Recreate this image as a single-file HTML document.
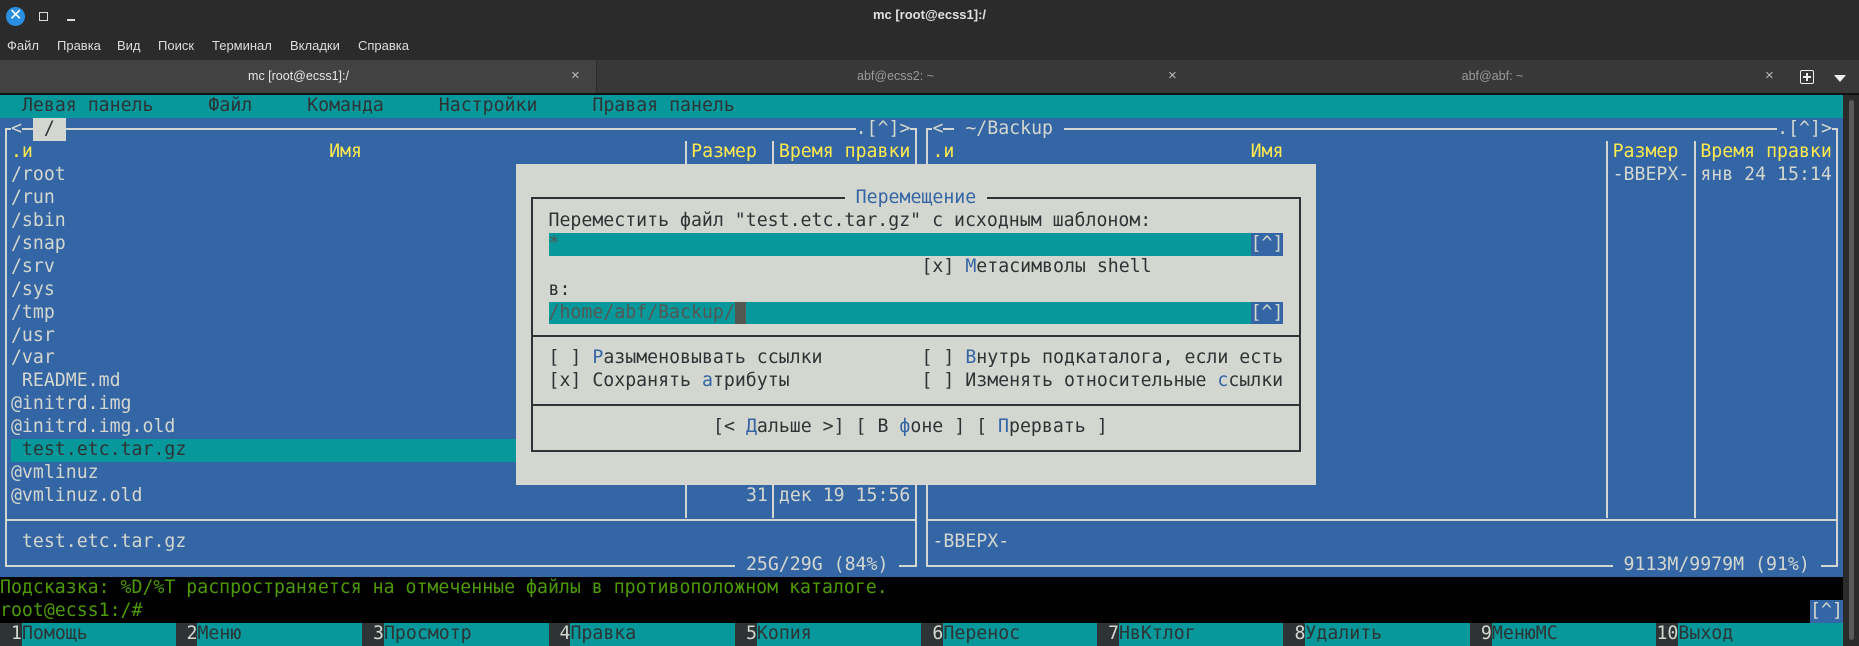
<!DOCTYPE html>
<html><head><meta charset="utf-8">
<style>
*{margin:0;padding:0;box-sizing:border-box}
html,body{width:1859px;height:645px;overflow:hidden;background:#2b2b2b;font-family:"Liberation Sans","DejaVu Sans",sans-serif}
.t{position:absolute;white-space:pre;font-family:"DejaVu Sans Mono",monospace;font-size:18.22px;line-height:22.95px;height:22.95px;
 left:calc(var(--c)*10.97px);top:calc(95px + var(--r)*22.95px);color:#d3d7cf}
.bg{position:absolute;left:calc(var(--c)*10.97px);top:calc(95px + var(--r)*22.95px);width:calc(var(--w)*10.97px);height:calc(var(--h,1)*22.95px)}
.h{position:absolute;height:2px;background:#d3d7cf;left:calc(var(--c)*10.97px + 5px);width:calc(var(--w)*10.97px + 1px);top:calc(95px + var(--r)*22.95px + 10.5px)}
.v{position:absolute;width:2px;background:#d3d7cf;left:calc(var(--c)*10.97px + 4.5px);top:calc(95px + var(--r)*22.95px + var(--o,10.5px));height:calc(var(--h)*22.95px + var(--e,0px))}
.d{background:#2e3436}
.y{color:#fce94f}
.k{color:#2e3436}
.b{color:#3465a4}
.blu{background:#3465a4}
.tl{background:#06989a}
.gr{background:#d3d7cf}
.ui{position:absolute;white-space:pre;font-size:14px;color:#dcdcdc}
</style></head><body>
<div style="position:absolute;left:6px;top:7px;width:19px;height:19px;border-radius:50%;background:#2a8fe0"></div>
<div class="ui" style="left:9px;top:5px;font-size:16px;font-weight:bold;color:#fff">✕</div>
<div style="position:absolute;left:39px;top:12px;width:9px;height:9px;border:1.5px solid #ddd"></div>
<div style="position:absolute;left:67px;top:19px;width:8px;height:1.5px;background:#ddd"></div>
<div class="ui" style="left:0;top:7px;width:1859px;text-align:center;font-size:13px;font-weight:bold;color:#e0e0e0">mc [root@ecss1]:/</div>
<div class="ui" style="left:7px;top:38px;font-size:13px">Файл</div>
<div class="ui" style="left:57px;top:38px;font-size:13px">Правка</div>
<div class="ui" style="left:117px;top:38px;font-size:13px">Вид</div>
<div class="ui" style="left:158px;top:38px;font-size:13px">Поиск</div>
<div class="ui" style="left:212px;top:38px;font-size:13px">Терминал</div>
<div class="ui" style="left:290px;top:38px;font-size:13px">Вкладки</div>
<div class="ui" style="left:358px;top:38px;font-size:13px">Справка</div>
<div style="position:absolute;left:0;top:60px;width:1859px;height:33px;background:#383838"></div>
<div style="position:absolute;left:0;top:60px;width:597px;height:33px;background:#424242;border-right:1px solid #2b2b2b"></div>
<div style="position:absolute;left:0;top:93px;width:1859px;height:2px;background:#111"></div>
<div class="ui" style="left:0;top:69px;width:597px;text-align:center;font-size:12.5px;color:#e6e6e6">mc [root@ecss1]:/</div>
<div class="ui" style="left:571px;top:67px;font-size:15px;color:#bbb">×</div>
<div class="ui" style="left:597px;top:69px;width:597px;text-align:center;font-size:12.5px;color:#9a9a9a">abf@ecss2: ~</div>
<div class="ui" style="left:1168px;top:67px;font-size:15px;color:#bbb">×</div>
<div class="ui" style="left:1194px;top:69px;width:597px;text-align:center;font-size:12.5px;color:#9a9a9a">abf@abf: ~</div>
<div class="ui" style="left:1765px;top:67px;font-size:15px;color:#bbb">×</div>
<div style="position:absolute;left:1800px;top:70px;width:14px;height:14px;border:1.5px solid #eee;border-radius:2px"></div>
<div style="position:absolute;left:1806px;top:73px;width:2px;height:8px;background:#eee"></div>
<div style="position:absolute;left:1803px;top:76px;width:8px;height:2px;background:#eee"></div>
<div style="position:absolute;left:1834px;top:75px;width:0;height:0;border-left:6px solid transparent;border-right:6px solid transparent;border-top:7px solid #eee"></div>
<div style="position:absolute;left:1843px;top:95px;width:16px;height:550px;background:#2b2b2b"></div>
<div style="position:absolute;left:1849px;top:100px;width:5px;height:540px;background:#5a5a5a;border-radius:3px"></div>

<div class="bg tl" style="--c:0;--r:0;--w:168"></div>
<div class="bg blu" style="--c:0;--r:1;--w:168;--h:20"></div>
<div class="bg" style="--c:0;--r:21;--w:168;--h:2;background:#000"></div>

<div class="t k" style="--c:2;--r:0">Левая панель</div>
<div class="t k" style="--c:19;--r:0">Файл</div>
<div class="t k" style="--c:28;--r:0">Команда</div>
<div class="t k" style="--c:40;--r:0">Настройки</div>
<div class="t k" style="--c:54;--r:0">Правая панель</div>

<div class="h" style="--c:0;--r:1;--w:83"></div>
<div class="h" style="--c:0;--r:18;--w:83"></div>
<div class="h" style="--c:0;--r:20;--w:83"></div>
<div class="v" style="--c:0;--r:1;--h:19;--e:2px"></div>
<div class="v" style="--c:83;--r:1;--h:19;--e:2px"></div>
<div class="v" style="--c:62;--r:2;--h:16;--o:0px;--e:10px"></div>
<div class="v" style="--c:70;--r:2;--h:16;--o:0px;--e:10px"></div>
<div class="t blu" style="--c:1;--r:1">&lt;</div>
<div class="t k gr" style="--c:3;--r:1"> / </div>
<div class="t blu" style="--c:78;--r:1">.[^]&gt;</div>
<div class="t y blu" style="--c:1;--r:2">.и</div>
<div class="t y" style="--c:30;--r:2">Имя</div>
<div class="t y" style="--c:63;--r:2">Размер</div>
<div class="t y" style="--c:71;--r:2">Время правки</div>
<div class="t" style="--c:1;--r:3">/root</div>
<div class="t" style="--c:1;--r:4">/run</div>
<div class="t" style="--c:1;--r:5">/sbin</div>
<div class="t" style="--c:1;--r:6">/snap</div>
<div class="t" style="--c:1;--r:7">/srv</div>
<div class="t" style="--c:1;--r:8">/sys</div>
<div class="t" style="--c:1;--r:9">/tmp</div>
<div class="t" style="--c:1;--r:10">/usr</div>
<div class="t" style="--c:1;--r:11">/var</div>
<div class="t" style="--c:1;--r:12"> README.md</div>
<div class="t" style="--c:1;--r:13">@initrd.img</div>
<div class="t" style="--c:1;--r:14">@initrd.img.old</div>
<div class="bg tl" style="--c:1;--r:15;--w:82"></div>
<div class="t k" style="--c:1;--r:15"> test.etc.tar.gz</div>
<div class="t" style="--c:1;--r:16">@vmlinuz</div>
<div class="t" style="--c:1;--r:17">@vmlinuz.old</div>
<div class="t" style="--c:68;--r:17">31</div>
<div class="t" style="--c:71;--r:17">дек 19 15:56</div>
<div class="t" style="--c:1;--r:19"> test.etc.tar.gz</div>
<div class="t blu" style="--c:67;--r:20"> 25G/29G (84%) </div>

<div class="h" style="--c:84;--r:1;--w:83"></div>
<div class="h" style="--c:84;--r:18;--w:83"></div>
<div class="h" style="--c:84;--r:20;--w:83"></div>
<div class="v" style="--c:84;--r:1;--h:19;--e:2px"></div>
<div class="v" style="--c:167;--r:1;--h:19;--e:2px"></div>
<div class="v" style="--c:146;--r:2;--h:16;--o:0px;--e:10px"></div>
<div class="v" style="--c:154;--r:2;--h:16;--o:0px;--e:10px"></div>
<div class="t blu" style="--c:85;--r:1">&lt;</div>
<div class="t blu" style="--c:87;--r:1"> ~/Backup </div>
<div class="t blu" style="--c:162;--r:1">.[^]&gt;</div>
<div class="t y" style="--c:85;--r:2">.и</div>
<div class="t y" style="--c:114;--r:2">Имя</div>
<div class="t y" style="--c:147;--r:2">Размер</div>
<div class="t y" style="--c:155;--r:2">Время правки</div>
<div class="t" style="--c:147;--r:3">-ВВЕРХ-</div>
<div class="t" style="--c:155;--r:3">янв 24 15:14</div>
<div class="t" style="--c:85;--r:19">-ВВЕРХ-</div>
<div class="t blu" style="--c:147;--r:20"> 9113M/9979M (91%) </div>

<div class="t" style="--c:0;--r:21;color:#4e9a06">Подсказка: %D/%T распространяется на отмеченные файлы в противоположном каталоге.</div>
<div class="t" style="--c:0;--r:22;color:#4e9a06">root@ecss1:/#</div>
<div class="t blu" style="--c:165;--r:22">[^]</div>

<div class="bg tl" style="--c:0;--r:23;--w:168"></div>
<div class="t d" style="--c:0;--r:23"> 1</div><div class="t k" style="--c:2;--r:23">Помощь</div>
<div class="t d" style="--c:16;--r:23"> 2</div><div class="t k" style="--c:18;--r:23">Меню</div>
<div class="t d" style="--c:33;--r:23"> 3</div><div class="t k" style="--c:35;--r:23">Просмотр</div>
<div class="t d" style="--c:50;--r:23"> 4</div><div class="t k" style="--c:52;--r:23">Правка</div>
<div class="t d" style="--c:67;--r:23"> 5</div><div class="t k" style="--c:69;--r:23">Копия</div>
<div class="t d" style="--c:84;--r:23"> 6</div><div class="t k" style="--c:86;--r:23">Перенос</div>
<div class="t d" style="--c:100;--r:23"> 7</div><div class="t k" style="--c:102;--r:23">НвКтлог</div>
<div class="t d" style="--c:117;--r:23"> 8</div><div class="t k" style="--c:119;--r:23">Удалить</div>
<div class="t d" style="--c:134;--r:23"> 9</div><div class="t k" style="--c:136;--r:23">МенюMC</div>
<div class="t d" style="--c:151;--r:23">10</div><div class="t k" style="--c:153;--r:23">Выход</div>

<div class="bg gr" style="--c:47;--r:3;--w:73;--h:14"></div>
<div class="h" style="--c:48;--r:4;--w:70;background:#2e3436"></div>
<div class="h" style="--c:48;--r:10;--w:70;background:#2e3436"></div>
<div class="h" style="--c:48;--r:13;--w:70;background:#2e3436"></div>
<div class="h" style="--c:48;--r:15;--w:70;background:#2e3436"></div>
<div class="v" style="--c:48;--r:4;--h:11;--e:2px;background:#2e3436"></div>
<div class="v" style="--c:118;--r:4;--h:11;--e:2px;background:#2e3436"></div>
<div class="t b gr" style="--c:77;--r:4"> Перемещение </div>
<div class="t k" style="--c:50;--r:5">Переместить файл "test.etc.tar.gz" с исходным шаблоном:</div>
<div class="bg tl" style="--c:50;--r:6;--w:64"></div>
<div class="t" style="--c:50;--r:6;color:#555753">*</div>
<div class="t blu" style="--c:114;--r:6">[^]</div>
<div class="t k" style="--c:84;--r:7">[x] <span class="b">М</span>етасимволы shell</div>
<div class="t k" style="--c:50;--r:8">в:</div>
<div class="bg tl" style="--c:50;--r:9;--w:64"></div>
<div class="t" style="--c:50;--r:9;color:#555753">/home/abf/Backup/</div>
<div class="bg" style="--c:67;--r:9;--w:1;background:#555753"></div>
<div class="t blu" style="--c:114;--r:9">[^]</div>
<div class="t k" style="--c:50;--r:11">[ ] <span class="b">Р</span>азыменовывать ссылки</div>
<div class="t k" style="--c:84;--r:11">[ ] <span class="b">В</span>нутрь подкаталога, если есть</div>
<div class="t k" style="--c:50;--r:12">[x] Сохранять <span class="b">а</span>трибуты</div>
<div class="t k" style="--c:84;--r:12">[ ] Изменять относительные <span class="b">с</span>сылки</div>
<div class="t k" style="--c:65;--r:14">[&lt; <span class="b">Д</span>альше &gt;] [ В <span class="b">ф</span>оне ] [ <span class="b">П</span>рервать ]</div>
</body></html>
